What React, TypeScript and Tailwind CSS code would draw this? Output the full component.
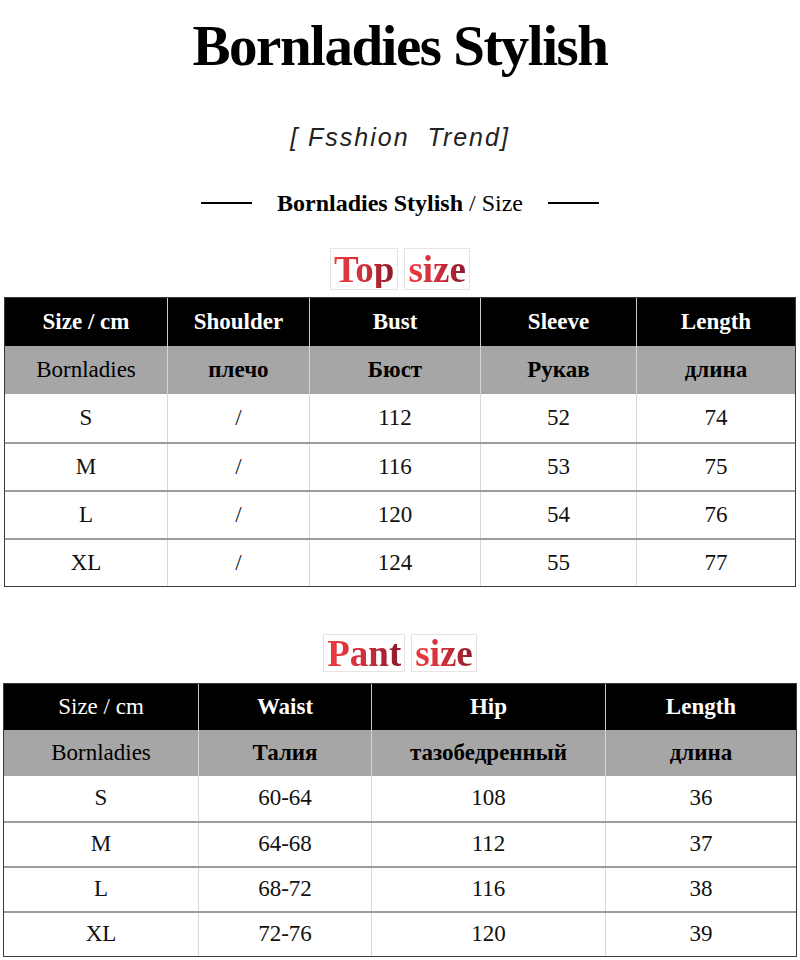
import React from "react"

const serif = { fontFamily: '"Liberation Serif", "Times New Roman", serif' }

type Cell = { text: string; bold?: boolean }

const topCols = "grid-cols-[162px_142px_171px_156px_1fr]"
const pantCols = "grid-cols-[194px_173px_234px_1fr]"

const topHead: Cell[] = [
  { text: "Size / cm", bold: true },
  { text: "Shoulder", bold: true },
  { text: "Bust", bold: true },
  { text: "Sleeve", bold: true },
  { text: "Length", bold: true },
]
const topSub: Cell[] = [
  { text: "Bornladies" },
  { text: "плечо", bold: true },
  { text: "Бюст", bold: true },
  { text: "Рукав", bold: true },
  { text: "длина", bold: true },
]
const topRows = [
  ["S", "/", "112", "52", "74"],
  ["M", "/", "116", "53", "75"],
  ["L", "/", "120", "54", "76"],
  ["XL", "/", "124", "55", "77"],
]

const pantHead: Cell[] = [
  { text: "Size / cm" },
  { text: "Waist", bold: true },
  { text: "Hip", bold: true },
  { text: "Length", bold: true },
]
const pantSub: Cell[] = [
  { text: "Bornladies" },
  { text: "Талия", bold: true },
  { text: "тазобедренный", bold: true },
  { text: "длина", bold: true },
]
const pantRows = [
  ["S", "60-64", "108", "36"],
  ["M", "64-68", "112", "37"],
  ["L", "68-72", "116", "38"],
  ["XL", "72-76", "120", "39"],
]

function Heading({ first, second, size }: { first: string; second: string; size: string }) {
  return (
    <div className="flex justify-center items-center gap-[6px]" style={serif}>
      {[first, second].map((w) => (
        <div key={w} className={`border border-[#e4e4e4] px-[3px] flex items-center ${size}`}>
          <span className="text-[37px] leading-none font-bold bg-gradient-to-r from-[#ec3a3f] via-[#d0303a] to-[#8c1a2c] bg-clip-text text-transparent">
            {w}
          </span>
        </div>
      ))}
    </div>
  )
}

function SizeTable({
  cols,
  head,
  sub,
  rows,
  headH,
  rowH,
  className,
}: {
  cols: string
  head: Cell[]
  sub: Cell[]
  rows: string[][]
  headH: string
  rowH: string
  className: string
}) {
  return (
    <div className={`border-[1.5px] border-[#3a3a3a] text-[23px] ${className}`} style={serif}>
      <div className={`grid ${cols} bg-black text-white ${headH}`}>
        {head.map((c, i) => (
          <div
            key={i}
            className={`flex items-center justify-center ${c.bold ? "font-bold" : ""} ${i > 0 ? "border-l border-[#c8c8c8]" : ""}`}
          >
            {c.text}
          </div>
        ))}
      </div>
      <div className={`grid ${cols} bg-[#a6a6a6] text-black ${headH}`}>
        {sub.map((c, i) => (
          <div
            key={i}
            className={`flex items-center justify-center ${c.bold ? "font-bold" : ""} ${i > 0 ? "border-l border-[#d4d4d4]" : ""}`}
          >
            {c.text}
          </div>
        ))}
      </div>
      {rows.map((r, ri) => (
        <div
          key={ri}
          className={`grid ${cols} bg-white text-[#111] ${rowH} ${ri > 0 ? "border-t-2 border-[#9c9c9c]" : ""}`}
        >
          {r.map((t, i) => (
            <div
              key={i}
              className={`flex items-center justify-center ${i > 0 ? "border-l border-[#d8d8d8]" : ""}`}
            >
              {t}
            </div>
          ))}
        </div>
      ))}
    </div>
  )
}

export default function App() {
  return (
    <div className="w-[800px] h-[960px] bg-white overflow-hidden flex flex-col">
      {/* Title */}
      <h1
        className="mt-[18px] text-center text-[57px] leading-[56px] font-bold tracking-[-1.5px] text-black"
        style={serif}
      >
        Bornladies Stylish
      </h1>

      <p
        className="mt-[49px] text-center text-[25px] leading-[28px] italic tracking-[2px] whitespace-pre text-[#222]"
        style={{ fontFamily: '"Liberation Sans", Arial, sans-serif' }}
      >
        {"[ Fsshion  Trend]"}
      </p>

      <div className="mt-[38px] flex items-center justify-center" style={serif}>
        <div className="w-[51px] h-[2px] bg-black" />
        <div className="mx-[25px] text-[24px] leading-[28px] text-black">
          <span className="font-bold">Bornladies Stylish</span> / Size
        </div>
        <div className="w-[51px] h-[2px] bg-black" />
      </div>

      <div className="mt-[31px]">
        <Heading first="Top" second="size" size="h-[42px]" />
      </div>

      <SizeTable
        cols={topCols}
        head={topHead}
        sub={topSub}
        rows={topRows}
        headH="h-[48px]"
        rowH="h-[48px]"
        className="mt-[7px] ml-[4px] w-[792px]"
      />

      <div className="mt-[47px]">
        <Heading first="Pant" second="size" size="h-[38px]" />
      </div>

      <SizeTable
        cols={pantCols}
        head={pantHead}
        sub={pantSub}
        rows={pantRows}
        headH="h-[46px]"
        rowH="h-[45px]"
        className="mt-[11px] ml-[3px] w-[794px]"
      />
    </div>
  )
}
